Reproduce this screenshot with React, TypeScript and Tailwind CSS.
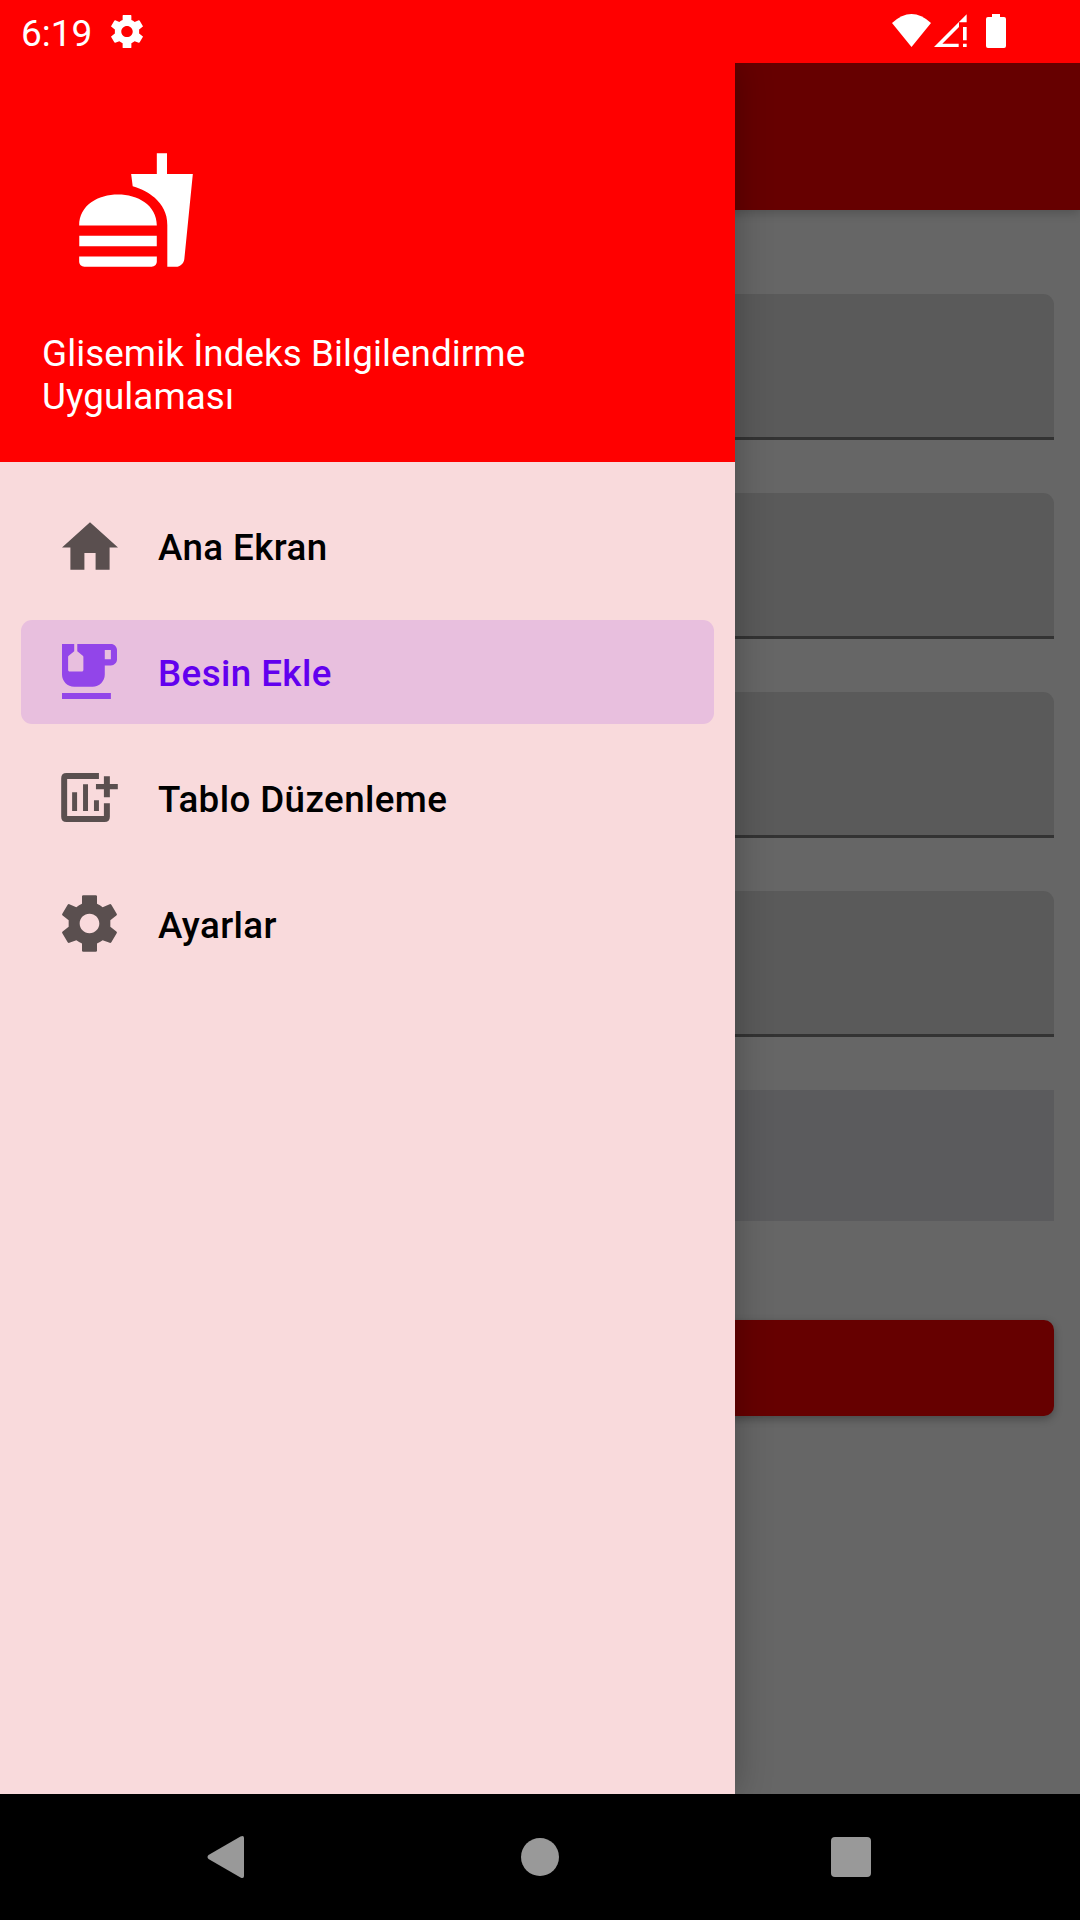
import React from "react";

const GEAR =
  "M246 468Q246 465 250 465H287Q291 465 291 468V491Q300 495 308 501L329 492Q332 491 334 494L350 521Q352 524 349 526L331 540V560L349 574Q352 576 350 579L334 606Q332 609 329 608L308 600Q300 606 291 610V632Q291 635 287 635H250Q246 635 246 632V610Q237 606 229 600L208 608Q205 609 203 606L187 579Q185 576 188 574L206 560V540L188 526Q185 524 187 521L203 494Q205 491 208 492L229 501Q237 495 246 491ZM268.5 521C252 521 239 534 239 550S252 579 268.5 579S298 566 298 550S285 521 268.5 521Z";

function Gear({ className }: { className: string }) {
  return (
    <svg viewBox="186 465 165 170" className={className} fill="currentColor">
      <path fillRule="evenodd" d={GEAR} />
    </svg>
  );
}

function StatusBar() {
  return (
    <header className="flex h-[63px] items-start bg-[#ff0000] text-white">
      <span className="ml-[21px] mt-3 w-[72px] whitespace-nowrap text-[37px] leading-[43px]">6:19</span>
      <Gear className="ml-[18px] mt-[15px] h-[33px] w-[32px]" />
      <div className="ml-auto mr-[74px] mt-3.5 flex items-start">
        <svg viewBox="96 42 117 99" className="h-[33px] w-[39px]" fill="currentColor">
          <path d="M96 69Q154.500 15 213 69L154.500 141Z" />
        </svg>
        <svg viewBox="223 42 99 99" className="ml-[3px] h-[33px] w-[33px]" fill="currentColor">
          <path d="M223 141L321 43V67H298V81L248 131H297V141Z" />
          <path d="M310 81h11v40h-11zM310 131h11v10h-11z" />
        </svg>
        <svg viewBox="378 42 60 102" className="ml-[19px] h-[34px] w-[20px]" fill="currentColor">
          <path d="M396 42H420V51H432Q438 51 438 57V138Q438 144 432 144H384Q378 144 378 138V57Q378 51 384 51H396Z" />
        </svg>
      </div>
    </header>
  );
}

const items = [
  {
    label: "Ana Ekran",
    icon: (
      <svg viewBox="2 3 20 17" className="-mt-px h-12 w-14" fill="currentColor">
        <path d="M10 20v-6h4v6h5v-8h3L12 3 2 12h3v8z" />
      </svg>
    ),
  },
  {
    label: "Besin Ekle",
    active: true,
    icon: (
      <svg viewBox="4 3 18 18" className="-mt-[2px] h-[55px] w-[55px]" fill="currentColor">
        <path d="M20 3H9v2.4l1.810 1.450c.12.09.19.24.19.39v4.260c0 .28-.22.5-.5.5h-4c-.28 0-.5-.22-.5-.5V7.240c0-.15.07-.3.19-.39L8 5.400V3H4v10c0 2.210 1.790 4 4 4h6c2.210 0 4-1.790 4-4v-3h2c1.110 0 2-.89 2-2V5c0-1.110-.89-2-2-2zm0 5h-2V5h2v3zM4 19h16v2H4z" />
      </svg>
    ),
  },
  {
    label: "Tablo Düzenleme",
    icon: (
      <svg viewBox="183 98 171 148" className="-mt-[2px] h-[49px] w-[57px]" fill="currentColor">
        <path d="M297 98V116H201V228H312V189H330V230Q330 246 314 246H199Q183 246 183 230V114Q183 98 199 98Z" />
        <path d="M312 108h18v23h24v16h-24v24h-18v-24h-24v-16h24zM216 156h15v57h-15zM249 132h15v81h-15zM282 180h15v33h-15z" />
      </svg>
    ),
  },
  { label: "Ayarlar", icon: <Gear className="-mt-[2px] h-[57px] w-[55px]" /> },
];

function Drawer() {
  return (
    <aside className="absolute inset-y-0 left-0 w-[735px] bg-[#f9dadc] shadow-[0_0_34px_rgba(0,0,0,0.28)]">
      <div className="flex h-[399px] flex-col bg-[#ff0000] pl-[42px] text-white">
        <svg viewBox="0 0 24 24" className="ml-8 mt-[85px] h-[124px] w-[124px] shrink-0" fill="currentColor">
          <path d="M18.060 22.990h1.660c.84 0 1.530-.64 1.630-1.460L23 5.050h-5V1h-1.970v4.050h-4.970l.3 2.340c1.710.47 3.310 1.320 4.270 2.260 1.440 1.420 2.430 2.890 2.430 5.290v8.050zM1 21.990V21h15.030v.99c0 .55-.45 1-1.010 1H2.010c-.56 0-1.010-.45-1.010-1zm15.030-7c0-8-15.030-8-15.030 0h15.030zM1.020 17h15v2h-15z" />
        </svg>
        <p className="mt-[60px] text-[36.750px] leading-[43px] tracking-[0.1px]">
          Glisemik İndeks Bilgilendirme
          <br />
          Uygulaması
        </p>
      </div>
      <nav className="flex flex-col gap-[22px] px-[21px] pt-8">
        {items.map((item) => (
          <a
            key={item.label}
            className={
              item.active
                ? "flex h-[104px] items-center rounded-[11px] bg-[#e8bfde] text-[#6200ee]"
                : "flex h-[104px] items-center rounded-[11px] text-black"
            }
          >
            <span className={item.active ? "ml-10 flex w-[57px] justify-center text-[#9245e9]" : "ml-10 flex w-[57px] justify-center text-[#5a4f4f]"}>
              {item.icon}
            </span>
            <span className="ml-10 pt-[2px] text-[36.750px] font-medium leading-[43px] tracking-[0.4px]">{item.label}</span>
          </a>
        ))}
      </nav>
    </aside>
  );
}

function Form() {
  return (
    <main className="flex h-full flex-col bg-[#666666]">
      <div className="h-[147px] shrink-0 bg-[#660000] shadow-[0_3px_10px_rgba(0,0,0,0.2)]" />
      <div className="flex flex-col px-[26px] pt-[84px]">
        <div className="flex flex-col gap-[53px]">
          {[0, 1, 2, 3].map((n) => (
            <div key={n} className="h-[146px] rounded-t-[11px] border-b-[3px] border-[#333333] bg-[#5a5a5a]" />
          ))}
        </div>
        <div className="mt-[53px] h-[131px] bg-[#5b5b5d]" />
        <div className="mt-[99px] h-24 rounded-[10px] bg-[#660000] shadow-[0_3px_8px_rgba(0,0,0,0.3)]" />
      </div>
    </main>
  );
}

function NavigationBar() {
  return (
    <footer className="flex h-[126px] items-center bg-black pl-[207px] text-[#999999]">
      <svg viewBox="0 0 37 42" className="h-[42px] w-[37px]" fill="currentColor">
        <path d="M33.500 .5Q37 -1 37 2V40Q37 43 33.500 41.500L1.500 23Q-.5 21 1.500 19Z" />
      </svg>
      <div className="ml-[277px] size-[38px] rounded-full bg-current" />
      <div className="ml-[272px] size-10 rounded-[4px] bg-current" />
    </footer>
  );
}

export default function App() {
  return (
    <div className="flex h-[1920px] w-[1080px] flex-col overflow-hidden font-[Roboto,sans-serif]">
      <StatusBar />
      <div className="relative h-[1731px] overflow-hidden">
        <Form />
        <Drawer />
      </div>
      <NavigationBar />
    </div>
  );
}
